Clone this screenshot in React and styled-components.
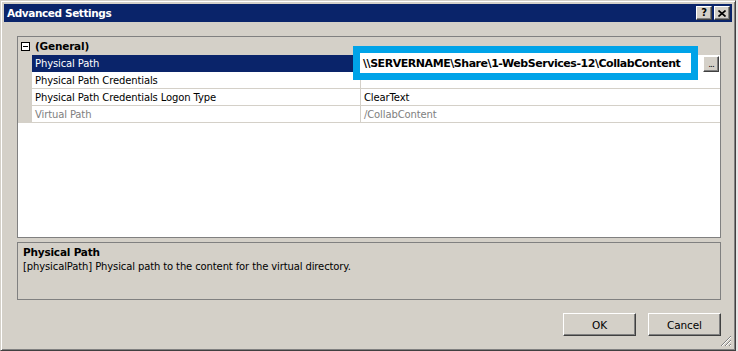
import React from "react";
import styled, { createGlobalStyle } from "styled-components";

const GlobalStyle = createGlobalStyle`
  html, body { margin: 0; padding: 0; }
  body {
    background: #e6e6e6;
    font-family: "DejaVu Sans", Verdana, sans-serif;
    font-size: 10px;
    letter-spacing: -0.12px;
    color: #000;
    overflow: hidden;
  }
`;

const Window = styled.div`
  position: relative;
  box-sizing: border-box;
  width: 736px;
  height: 351px;
  background: #d4d0c8;
  border: 1px solid;
  border-color: #d4d0c8 #404040 #404040 #d4d0c8;
  box-shadow: inset 1px 1px 0 #fff, inset -1px -1px 0 #808080;
  padding: 3px;
  display: flex;
  flex-direction: column;
`;

const TitleBar = styled.div`
  height: 18px;
  background: #0a246a;
  display: flex;
  align-items: center;
  justify-content: space-between;
  padding: 0 2px 0 3px;
`;

const TitleText = styled.div`
  color: #fff;
  font-weight: bold;
  font-size: 10.5px;
  letter-spacing: -0.4px;
`;

const CaptionButtons = styled.div`
  display: flex;
  gap: 2px;
`;

const CaptionButton = styled.div`
  box-sizing: border-box;
  width: 16px;
  height: 14px;
  background: #d4d0c8;
  border: 1px solid;
  border-color: #fff #404040 #404040 #fff;
  box-shadow: inset -1px -1px 0 #808080;
  display: flex;
  align-items: center;
  justify-content: center;
  font-weight: bold;
  font-size: 10px;
  line-height: 1;
  color: #000;
`;

const Content = styled.div`
  flex: 1;
  display: flex;
  flex-direction: column;
  padding: 14px 11px 0 13px;
`;

const Grid = styled.div`
  position: relative;
  box-sizing: border-box;
  height: 202px;
  border: 1px solid #808080;
  background: #fff;
`;

const CategoryRow = styled.div`
  height: 18px;
  background: #d4d0c8;
  display: flex;
  align-items: center;
  font-weight: bold;
  font-size: 10.5px;
  letter-spacing: -0.2px;
`;

const Expander = styled.div`
  width: 14px;
  display: flex;
  justify-content: center;
  align-items: center;
  margin-right: 3px;
`;

const Row = styled.div`
  display: grid;
  grid-template-columns: 14px 329px 1fr;
  height: 17px;
`;

const Margin = styled.div`
  background: #d4d0c8;
`;

const Cell = styled.div`
  box-sizing: border-box;
  display: flex;
  align-items: center;
  padding-left: 3px;
  border-bottom: 1px solid #d4d0c8;
  border-right: ${(p) => (p.$name ? "1px solid #d4d0c8" : "none")};
  background: ${(p) => (p.$selected ? "#0a246a" : "#fff")};
  color: ${(p) => (p.$selected ? "#fff" : p.$disabled ? "#808080" : "#000")};
  white-space: nowrap;
  justify-content: ${(p) => (p.$editor ? "flex-end" : "flex-start")};
  padding-right: ${(p) => (p.$editor ? "1px" : "0")};
`;

const EllipsisButton = styled.div`
  box-sizing: border-box;
  width: 16px;
  height: 16px;
  margin-top: 1px;
  background: #d4d0c8;
  border: 1px solid;
  border-color: #fff #404040 #404040 #fff;
  box-shadow: inset -1px -1px 0 #808080;
  font-size: 9px;
  line-height: 1;
  display: flex;
  align-items: flex-end;
  justify-content: center;
  padding-bottom: 2px;
  letter-spacing: -1px;
`;

const Highlight = styled.div`
  position: absolute;
  left: 335px;
  top: 9px;
  width: 345px;
  height: 34px;
  box-sizing: border-box;
  border: 7px solid #00a3e8;
  background: #fff;
  display: flex;
  align-items: center;
  padding-left: 3px;
  font-family: "DejaVu Sans", Verdana, sans-serif;
  font-weight: bold;
  font-size: 11px;
  letter-spacing: -0.45px;
  color: #000;
  white-space: nowrap;
`;

const Description = styled.div`
  box-sizing: border-box;
  margin-top: 4px;
  height: 58px;
  border: 1px solid #808080;
  padding: 3px 5px;
  display: flex;
  flex-direction: column;
  gap: 3px;
`;

const DescTitle = styled.div`
  font-weight: bold;
  font-size: 10.5px;
  letter-spacing: -0.2px;
`;

const DescText = styled.div``;

const ButtonRow = styled.div`
  margin-top: 13px;
  display: flex;
  justify-content: flex-end;
  gap: 12px;
`;

const Button = styled.div`
  box-sizing: border-box;
  width: 73px;
  height: 23px;
  background: #d4d0c8;
  border: 1px solid;
  border-color: #fff #404040 #404040 #fff;
  box-shadow: inset -1px -1px 0 #808080;
  display: flex;
  align-items: center;
  justify-content: center;
  font-size: 10.5px;
`;

const Grip = styled.svg`
  position: absolute;
  right: 3px;
  bottom: 3px;
`;

const rows = [
  { name: "Physical Path", value: "", selected: true },
  { name: "Physical Path Credentials", value: "" },
  { name: "Physical Path Credentials Logon Type", value: "ClearText" },
  { name: "Virtual Path", value: "/CollabContent", disabled: true },
];

export default function App() {
  return (
    <>
      <GlobalStyle />
      <Window>
        <TitleBar>
          <TitleText>Advanced Settings</TitleText>
          <CaptionButtons>
            <CaptionButton>?</CaptionButton>
            <CaptionButton>
              <svg width="8" height="7" viewBox="0 0 8 7">
                <path d="M0.5 0.5 L7.5 6.5 M7.5 0.5 L0.5 6.5" stroke="#000" strokeWidth="1.6" />
              </svg>
            </CaptionButton>
          </CaptionButtons>
        </TitleBar>
        <Content>
          <Grid>
            <CategoryRow>
              <Expander>
                <svg width="9" height="9" viewBox="0 0 9 9">
                  <rect x="0.5" y="0.5" width="8" height="8" fill="#fff" stroke="#000" />
                  <path d="M2 4.5 H7" stroke="#000" />
                </svg>
              </Expander>
              (General)
            </CategoryRow>
            {rows.map((r) => (
              <Row key={r.name}>
                <Margin />
                <Cell $name $selected={r.selected} $disabled={r.disabled}>
                  {r.name}
                </Cell>
                <Cell $disabled={r.disabled} $editor={r.selected}>
                  {r.selected ? <EllipsisButton>...</EllipsisButton> : r.value}
                </Cell>
              </Row>
            ))}
            <Highlight>\\SERVERNAME\Share\1-WebServices-12\CollabContent</Highlight>
          </Grid>
          <Description>
            <DescTitle>Physical Path</DescTitle>
            <DescText>[physicalPath] Physical path to the content for the virtual directory.</DescText>
          </Description>
          <ButtonRow>
            <Button>OK</Button>
            <Button>Cancel</Button>
          </ButtonRow>
        </Content>
        <Grip width="12" height="12" viewBox="0 0 12 12">
          <path d="M11 1 L1 11 M11 5 L5 11 M11 9 L9 11" stroke="#808080" strokeWidth="1" />
          <path d="M11 2 L2 11 M11 6 L6 11 M11 10 L10 11" stroke="#fff" strokeWidth="1" />
        </Grip>
      </Window>
    </>
  );
}
